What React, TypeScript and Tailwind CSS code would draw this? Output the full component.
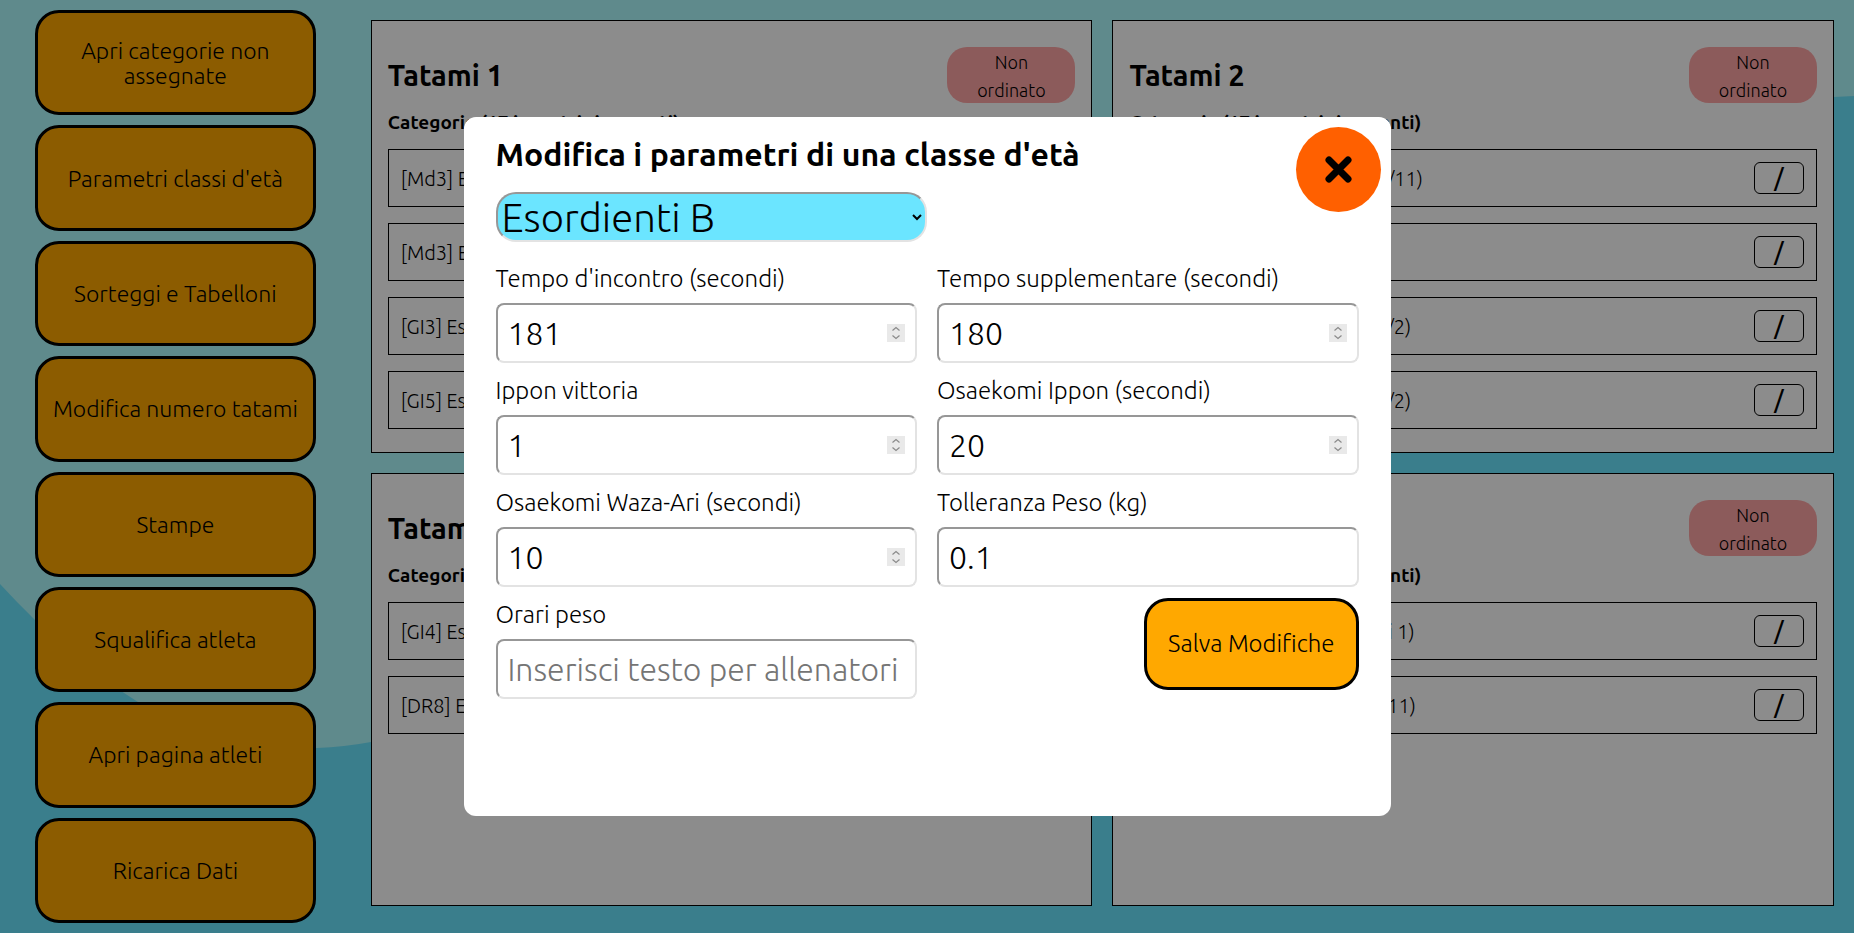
import React from 'react';

interface Category {
  id: string;
  label: string;
}

interface Tatami {
  id: number;
  matches: number;
  categories: Category[];
}

interface Field {
  name: string;
  label: string;
  type: 'number' | 'text';
  value?: string;
  placeholder?: string;
}

const menuItems = [
  'Apri categorie non assegnate',
  "Parametri classi d'età",
  'Sorteggi e Tabelloni',
  'Modifica numero tatami',
  'Stampe',
  'Squalifica atleta',
  'Apri pagina atleti',
  'Ricarica Dati',
];

const tatamiList: Tatami[] = [
  {
    id: 1,
    matches: 17,
    categories: [
      { id: 'Md3', label: 'Esordienti B M - 55 (0/11)' },
      { id: 'Md3', label: 'Esordienti B M (0/2)' },
      { id: 'GI3', label: 'Esordienti B M + 66 (0/2)' },
      { id: 'GI5', label: 'Esordienti B M + 73 (0/2)' },
    ],
  },
  {
    id: 2,
    matches: 17,
    categories: [
      { id: 'Md4', label: 'Esordienti B M - 60 (0/11)' },
      { id: 'Md5', label: 'Cadetti M (0/2)' },
      { id: 'GL6', label: 'Esordienti B M + 66 (0/2)' },
      { id: 'GL7', label: 'Esordienti B M + 73 (0/2)' },
    ],
  },
  {
    id: 3,
    matches: 17,
    categories: [
      { id: 'GI4', label: 'Esordienti B F (atleti 1)' },
      { id: 'DR8', label: 'Esordienti B M -66 (0/11)' },
    ],
  },
  {
    id: 4,
    matches: 17,
    categories: [
      { id: 'GI8', label: 'Esordienti B F - 4 (atleti 1)' },
      { id: 'DR9', label: 'Esordienti B M -73 (0/11)' },
    ],
  },
];

const fields: Field[] = [
  { name: 'match-time', label: "Tempo d'incontro (secondi)", type: 'number', value: '181' },
  { name: 'extra-time', label: 'Tempo supplementare (secondi)', type: 'number', value: '180' },
  { name: 'ippon', label: 'Ippon vittoria', type: 'number', value: '1' },
  { name: 'osaekomi-ippon', label: 'Osaekomi Ippon (secondi)', type: 'number', value: '20' },
  { name: 'osaekomi-wazaari', label: 'Osaekomi Waza-Ari (secondi)', type: 'number', value: '10' },
  { name: 'tolerance', label: 'Tolleranza Peso (kg)', type: 'text', value: '0.1' },
  { name: 'weigh-in', label: 'Orari peso', type: 'text', placeholder: 'Inserisci testo per allenatori' },
];

const Background: React.FC = () => (
  <svg
    className="absolute inset-0 -z-10 h-full w-full bg-[#6be5ff]"
    viewBox="0 0 1854 933"
    preserveAspectRatio="none"
    aria-hidden="true"
  >
    <path
      d="M0 0H1854V96L1834 97C1100 110 800 682 371 742Q344 747 317 748C250 752 190 733 138 702Q70 660 0 584Z"
      fill="#adfbff"
    />
  </svg>
);

const SpinButtons: React.FC = () => (
  <svg
    className="pointer-events-none absolute top-[21px] right-3 bg-[#e9e9e9]"
    width="18"
    height="18"
    fill="none"
    stroke="#8a8a8a"
    strokeWidth="1.2"
    aria-hidden="true"
  >
    <path d="M5.5 6.5L9 3.5L12.5 6.5M5.5 11.5L9 14.5L12.5 11.5" />
  </svg>
);

const TatamiCard: React.FC<{ tatami: Tatami }> = ({ tatami }) => (
  <section className="border border-black bg-white p-4">
    <div className="flex items-center justify-between py-2.5">
      <h2 className="pt-px text-[29px] font-bold">Tatami {tatami.id}</h2>
      <span className="h-14 w-32 rounded-[20px] bg-[#ffa7a7] px-5 pt-px text-center text-lg leading-7">
        Non ordinato
      </span>
    </div>
    <h3 className="pb-0.5 text-[19px] leading-[18px] font-bold">
      Categorie ({tatami.matches} incontri rimanenti)
    </h3>
    <ul className="mt-4 flex flex-col gap-4">
      {tatami.categories.map((category, i) => (
        <li key={i} className="flex h-[58px] items-center justify-between border border-black px-3">
          <span className="pt-px text-xl">
            [{category.id}] {category.label}
          </span>
          <span className="flex h-8 w-[50px] items-center justify-center rounded-md border border-black text-2xl font-medium">
            /
          </span>
        </li>
      ))}
    </ul>
  </section>
);

const AgeClassModal: React.FC = () => (
  <div className="fixed inset-0 flex items-center justify-center bg-black/45">
    <div
      role="dialog"
      aria-labelledby="modal-title"
      className="relative h-3/4 w-1/2 rounded-xl bg-white px-8 pt-[15px]"
    >
      <button
        aria-label="Chiudi"
        className="absolute top-2.5 right-2.5 flex size-[85px] items-center justify-center rounded-full bg-[#ff6000]"
      >
        <svg width="27" height="27" viewBox="0 0 27 27" stroke="#000" strokeWidth="7" strokeLinecap="round">
          <path d="M4 4L23 23M23 4L4 23" />
        </svg>
      </button>

      <h2 id="modal-title" className="text-[32px] leading-11 font-bold">
        Modifica i parametri di una classe d'età
      </h2>
      <select
        aria-label="Classe d'età"
        defaultValue="Esordienti B"
        className="mt-4 block h-[50px] w-1/2 rounded-[20px] border-2 border-t-[#979797] border-r-[#e3e3e3] border-b-[#e3e3e3] border-l-[#979797] bg-[#6be5ff] text-[40px] leading-[46px]"
      >
        <option>Esordienti A</option>
        <option>Esordienti B</option>
        <option>Cadetti</option>
      </select>

      <form className="mt-[19px] grid grid-cols-2 gap-x-5 gap-y-2.5">
        {fields.map((field) => (
          <div key={field.name}>
            <label htmlFor={field.name} className="mb-1.5 block text-2xl leading-9">
              {field.label}
            </label>
            <div className="relative">
              <input
                id={field.name}
                type={field.type}
                defaultValue={field.value}
                placeholder={field.placeholder}
                className="block h-[60px] w-full rounded-lg border-2 border-t-[#979797] border-r-[#e3e3e3] border-b-[#e3e3e3] border-l-[#979797] bg-white px-2.5 text-[32px] placeholder:text-[#757575] [&::-webkit-inner-spin-button]:appearance-none"
              />
              {field.type === 'number' && <SpinButtons />}
            </div>
          </div>
        ))}
        <button
          type="button"
          className="mt-px h-[92px] justify-self-end rounded-3xl border-3 border-black bg-[#ffa800] px-[21px] text-2xl"
        >
          Salva Modifiche
        </button>
      </form>
    </div>
  </div>
);

const App: React.FC = () => {
  return (
    <div className="relative isolate flex min-h-screen font-['Ubuntu','Noto_Sans',sans-serif] font-light text-black">
      <Background />

      <nav className="flex w-1/5 flex-col items-center gap-2.5 py-2.5 pr-5">
        {menuItems.map((item) => (
          <button
            key={item}
            className="w-4/5 flex-1 rounded-3xl border-3 border-black bg-[#ffa800] px-2.5 text-[23px] leading-[25px]"
          >
            {item}
          </button>
        ))}
      </nav>

      <main className="mt-5 grid h-[95vh] flex-1 grid-cols-2 grid-rows-2 gap-5 pr-5">
        {tatamiList.map((tatami) => (
          <TatamiCard key={tatami.id} tatami={tatami} />
        ))}
      </main>

      <AgeClassModal />
    </div>
  );
};

export default App;
